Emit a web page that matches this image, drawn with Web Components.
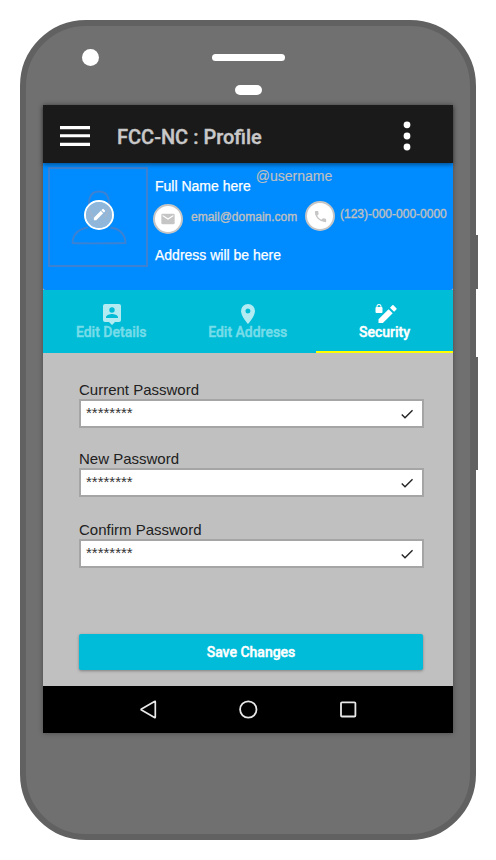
<!DOCTYPE html>
<html lang="en"><head><meta charset="utf-8"><title>FCC-NC : Profile</title>
<style>
html,body{margin:0;background:#fff}
body{width:496px;height:860px;overflow:hidden;font-family:"Liberation Sans",Arial,sans-serif}
</style></head><body>
<phone-frame>
  <app-bar>FCC-NC : Profile</app-bar>
  <profile-header>
    <span slot="name">Full Name here</span><span slot="user">@username</span>
    <span slot="email">email@domain.com</span><span slot="phone">(123)-000-000-0000</span>
    <span slot="address">Address will be here</span>
  </profile-header>
  <tab-bar>
    <tab-item icon="details">Edit Details</tab-item>
    <tab-item icon="place">Edit Address</tab-item>
    <tab-item icon="security" active>Security</tab-item>
  </tab-bar>
  <password-form>
    <password-field value="********">Current Password</password-field>
    <password-field value="********">New Password</password-field>
    <password-field value="********">Confirm Password</password-field>
    <save-button slot="action">Save Changes</save-button>
  </password-form>
  <nav-bar></nav-bar>
</phone-frame>
<script>
const define = (name, html, setup) => customElements.define(name, class extends HTMLElement {
  constructor() { super(); this.attachShadow({mode: "open"}); }
  connectedCallback() {
    this.shadowRoot.innerHTML = "<style>*{box-sizing:border-box}svg{display:block}</style>" + html;
    if (setup) setup(this, this.shadowRoot);
  }
});

define("phone-frame", `<style>
:host{display:block;position:relative;width:456px;height:820px;margin:20px;box-sizing:border-box;background:#707070;border:6px solid #616161;border-radius:66px;padding:23px 17px 0;}
.top{height:56px}
.row{display:flex;height:17px;align-items:center;padding-left:39px}
.cam{width:17px;height:17px;border-radius:50%;background:#fff}
.spk{width:73px;height:7px;border-radius:3.500px;background:#fff;margin-left:113px}
.sen{width:27px;height:10px;border-radius:5px;background:#fff;margin:19px 0 0 192px}
.screen{display:flex;flex-direction:column;width:410px;height:628px;box-shadow:0 0 5px rgba(0,0,0,.35);background:#c0c0c0}
.side{position:absolute;left:450px;width:2px;background:#616161}
</style>
<div class="top"><div class="row"><div class="cam"></div><div class="spk"></div></div><div class="sen"></div></div>
<div class="screen"><slot></slot></div>
<div class="side" style="top:209px;height:54px"></div><div class="side" style="top:331px;height:113px"></div>`);

define("app-bar", `<style>
:host{display:flex;align-items:center;height:58px;flex:none;background:#1a1a1a;color:#c8c8c8;font:500 20px/24px Roboto,sans-serif;padding:6px 41px 0 17px;box-sizing:border-box;box-shadow:0 2px 4px rgba(0,0,0,.4);position:relative;z-index:1}
.t{flex:1;margin-left:27px;-webkit-text-stroke:.4px #c8c8c8}
.menu,.more{margin-top:-3px}
</style>
<svg class="menu" width="30" height="22" viewBox="0 0 30 22" fill="#fff"><path d="M0 1h30v3.200H0zM0 9.300h30v3H0zM0 17.800h30V21H0z"/></svg>
<div class="t"><slot></slot></div>
<svg class="more" width="10" height="30" viewBox="0 0 10 30" fill="#fff"><circle cx="5" cy="3.800" r="3.400"/><circle cx="5" cy="15" r="3.400"/><circle cx="5" cy="26" r="3.400"/></svg>`);

define("round-badge", `<style>
:host{display:grid;place-items:center;width:30px;height:30px;border-radius:50%;border:2px solid #c5c5c5;background:#fff;box-sizing:border-box;flex:none}
:host([edit]){border-color:#fff;background:rgba(192,198,205,.75);background-clip:padding-box}
</style><slot></slot>`);

define("profile-header", `<style>
:host{display:grid;grid-template-columns:100px 1fr;column-gap:5px;height:127px;flex:none;padding:4px 0 0 5px;background:#008cff;color:#fff;font-size:14px;line-height:16px;box-sizing:border-box;border-radius:0 0 2px 2px}
.pic{display:grid;width:100px;height:100px;border:2px solid #3d82d2;}
.pic>*{grid-area:1/1}
.pic round-badge{place-self:center;margin:-5px 0 0 2px}
.info{display:flex;flex-direction:column}
.r1{display:flex;padding-left:2px;height:34px}
.name{margin-top:11px;-webkit-text-stroke:.25px #fff}
.user{margin:1px 0 0 5px;color:#c0c0c0;-webkit-text-stroke:.15px #c0c0c0}
.r2{display:flex;height:33px;font-size:12px;line-height:14px;color:#c0c0c0;-webkit-text-stroke:.35px #c0c0c0}
.mail{margin-top:3px}.em{margin:9px 0 0 8px;width:114px}.ph{margin:6px 0 0 5px}
.adr{margin:13px 0 0 2px;-webkit-text-stroke:.25px #fff}
</style>
<div class="pic">
<svg width="96" height="96" viewBox="50 169 96 96" fill="none" stroke="#3d82d2" stroke-width="1.800"><path d="M94 217.500C87 211 86 191.500 99 191.500S111 211 104 217.500M88 227.500c-10 1.500-15 6-15.500 15.500q13 .7 53 0c-.5-9-5-14-15-15.500"/></svg>
<round-badge edit><svg width="15" height="15" viewBox="0 0 24 24" fill="#fff"><path d="M3 17.250V21h3.750L17.810 9.940l-3.750-3.750L3 17.250zM20.710 7.040a1 1 0 0 0 0-1.410l-2.340-2.340a1 1 0 0 0-1.410 0l-1.830 1.830 3.750 3.750 1.830-1.830z"/></svg></round-badge></div>
<div class="info"><div class="r1"><div class="name"><slot name="name"></slot></div><div class="user"><slot name="user"></slot></div></div>
<div class="r2"><round-badge class="mail"><svg width="16" height="16" viewBox="0 0 24 24" fill="#c5c5c5"><path d="M20 4H4a2 2 0 0 0-2 2v12a2 2 0 0 0 2 2h16a2 2 0 0 0 2-2V6a2 2 0 0 0-2-2zm0 4l-8 5-8-5V6l8 5 8-5v2z"/></svg></round-badge><div class="em"><slot name="email"></slot></div>
<round-badge><svg width="15" height="15" viewBox="0 0 24 24" fill="#c5c5c5"><path d="M6.620 10.790a15.050 15.050 0 0 0 6.590 6.590l2.200-2.200a1 1 0 0 1 1.020-.24 11.400 11.400 0 0 0 3.570.57 1 1 0 0 1 1 1V20a1 1 0 0 1-1 1A17 17 0 0 1 3 4a1 1 0 0 1 1-1h3.500a1 1 0 0 1 1 1c0 1.250.2 2.450.57 3.570a1 1 0 0 1-.25 1.020l-2.200 2.200z"/></svg></round-badge><div class="ph"><slot name="phone"></slot></div></div>
<div class="adr"><slot name="address"></slot></div></div>`);

define("tab-bar", `<style>:host{display:grid;grid-template-columns:136.500px 136.500px 137px;height:63px;flex:none;background:#00bcd6}</style><slot></slot>`);

const tabIcons = {
  details: '<svg width="24" height="24" viewBox="0 0 24 24"><path d="M19 2H5a2 2 0 0 0-2 2v14a2 2 0 0 0 2 2h4l3 3 3-3h4a2 2 0 0 0 2-2V4a2 2 0 0 0-2-2zm-7 3.300a2.700 2.700 0 1 1 0 5.400 2.700 2.700 0 0 1 0-5.400zM18 16H6v-.9c0-2 4-3.100 6-3.100s6 1.100 6 3.100v.9z"/></svg>',
  place: '<svg width="24" height="24" viewBox="0 0 24 24"><path d="M12 2a7 7 0 0 0-7 7c0 5.250 7 13 7 13s7-7.750 7-13a7 7 0 0 0-7-7zm0 9.500a2.500 2.500 0 1 1 0-5 2.500 2.500 0 0 1 0 5z"/></svg>',
  security: '<svg width="24" height="24" viewBox="0 0 24 24"><path d="M5 2A2.500 2.500 0 0 0 2.500 4.500V5a1 1 0 0 0-1 1v4a1 1 0 0 0 1 1h5a1 1 0 0 0 1-1V6a1 1 0 0 0-1-1v-.5A2.500 2.500 0 0 0 5 2zm0 1A1.500 1.500 0 0 1 6.500 4.500V5h-3v-.5A1.500 1.500 0 0 1 5 3zM16 5.700L18.300 3.300Q18.900 2.700 19.500 3.300L22.400 6.200Q23 6.800 22.400 7.400L20.100 9.800zM14.600 7.200L18.700 11.300 8.900 21H4.500V17.200z"/></svg>'
};
define("tab-item", `<style>
:host{display:flex;flex-direction:column;align-items:center;box-sizing:border-box;padding-top:12px;font:500 14px/16px Roboto,sans-serif;color:#77dce9;-webkit-text-stroke:.4px currentColor}
:host([active]){color:#fff;border-bottom:2px solid #ff0}
.i{height:22px;fill:#b3ebf3;margin-left:2px}:host([active]) .i{fill:#fff}
:host([icon=place]) .i{margin-left:0}
</style><div class="i"></div><div><slot></slot></div>`, (el, root) => {
  root.querySelector(".i").innerHTML = tabIcons[el.getAttribute("icon")];
});

define("password-form", `<style>
:host{display:flex;flex-direction:column;flex:1;background:#c0c0c0;padding:28px 29px 16px 36px;box-sizing:border-box}
::slotted(password-field){margin-bottom:22px}
::slotted(password-field:nth-of-type(2)){margin-bottom:24px}
.a{margin:auto 1px 0 0}
</style><slot></slot><div class="a"><slot name="action"></slot></div>`);

define("password-field", `<style>
:host{display:block;color:#212121;font-size:15px}
label{display:block;line-height:18px;height:18px}
.box{display:flex;justify-content:space-between;height:29px;border:2px solid #a5a5a5;background:#fff;padding:3px 7px 0 5px;line-height:18px;color:#333}
svg{margin-top:2px}
</style><label><slot></slot></label><div class="box"><span></span><svg width="16" height="16" viewBox="0 0 24 24" fill="#222"><path d="M9 16.170L4.830 12l-1.420 1.410L9 19 21 7l-1.410-1.410z"/></svg></div>`, (el, root) => {
  root.querySelector("span").textContent = el.getAttribute("value");
});

define("save-button", `<style>:host{display:block;height:36px;border-radius:2px;background:#00bcd9;color:#fff;text-align:center;font:500 14px/36px Roboto,sans-serif;-webkit-text-stroke:.4px #fff;box-shadow:0 1px 3px rgba(0,0,0,.35)}</style><slot></slot>`);

define("nav-bar", `<style>:host{display:flex;justify-content:center;align-items:center;gap:76px;height:47px;flex:none;background:#000}</style>
<svg width="24" height="24" viewBox="0 0 24 24" fill="none" stroke="#e8e8e8" stroke-width="1.700" stroke-linejoin="round"><path d="M19.300 3.900v15.200Q19.300 20 18.500 19.500L5.500 12.100q-.8-.6 0-1.200L18.500 3.400q.8-.4.800.5z"/></svg>
<svg width="24" height="24" viewBox="0 0 24 24" fill="none" stroke="#e8e8e8" stroke-width="1.800"><circle cx="12.300" cy="11.500" r="8.200"/></svg>
<svg width="24" height="24" viewBox="0 0 24 24" fill="none" stroke="#e8e8e8" stroke-width="1.800"><rect x="5" y="4.300" width="14.400" height="14.200" rx="1"/></svg>`);
</script></body></html>
